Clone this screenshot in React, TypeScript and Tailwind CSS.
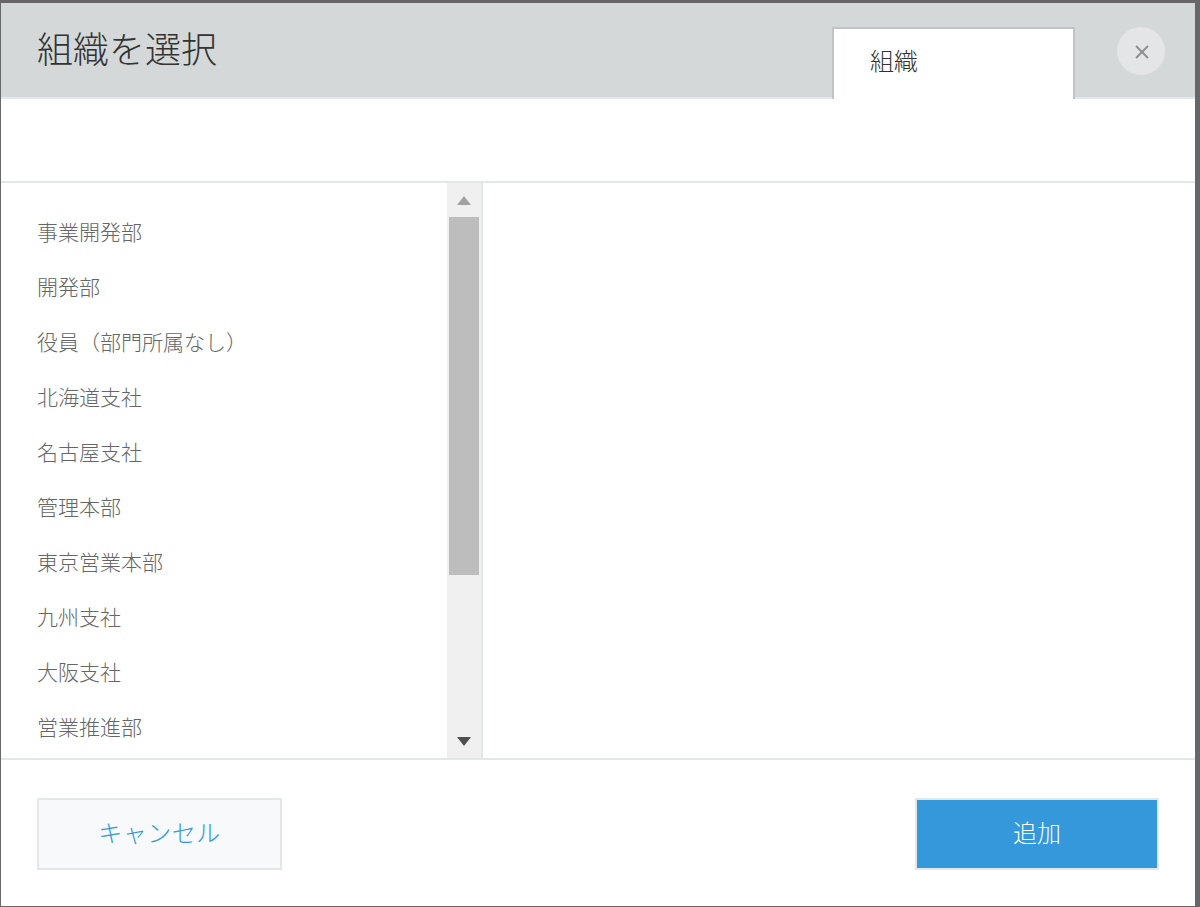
const items = ["事業開発部","開発部","役員（部門所属なし）","北海道支社","名古屋支社","管理本部","東京営業本部","九州支社","大阪支社","営業推進部"];
const font = "font-['Meiryo','Noto_Sans_CJK_JP','Noto_Sans_CJK_SC',sans-serif]";

export default function App() {
  return (
    <div className={`w-[1200px] h-[907px] bg-[#666769] pt-[3px] pl-px pr-[5px] pb-px overflow-hidden ${font} font-light`}>
      <div className="flex flex-col h-full bg-white">
        <header className="relative flex h-[96px] shrink-0 border-b-2 border-[#e3e7e8] bg-[#d4d8d8]">
          <h1 className="pl-[36px] pt-[18px] text-[36px] leading-[52px] font-light text-[#333]">組織を選択</h1>
          <div className="absolute left-[831px] top-[24px] h-[72px] w-[243px] border-2 border-b-0 border-[#bfc5c5] bg-white pl-[36px] pt-[13px] text-[24px] leading-[36px] text-[#333]">組織</div>
          <button className="absolute left-[1116px] top-[24px] flex h-12 w-12 items-center justify-center rounded-full bg-[#e3e5e7]">
            <svg className="ml-[2px] mt-[2px]" width="14" height="14" viewBox="0 0 14 14" fill="none" stroke="#8f8f8f" strokeWidth="2"><path d="M1 1l12 12M13 1L1 13"/></svg>
          </button>
        </header>
        <div className="h-[84px] shrink-0 border-b-2 border-[#e3e7e8]" />
        <div className="flex h-[577px] shrink-0 border-b-2 border-[#e3e7e8]">
          <ul className="w-[446px] pt-[21px] text-[21px] leading-[55px] text-[#666]">
            {items.map((t) => <li key={t} className="pl-[36px] whitespace-nowrap">{t}</li>)}
          </ul>
          <div className="flex w-[36px] flex-col items-center border-r-2 border-[#e3e7e8] bg-[#f0f0f0]">
            <svg className="mt-[13px]" width="14" height="9" viewBox="0 0 14 9"><path d="M7 0l7 9H0z" fill="#a3a3a3"/></svg>
            <div className="mt-[12px] h-[358px] w-[30px] bg-[#bdbdbd]" />
            <svg className="mt-[162px]" width="14" height="9" viewBox="0 0 14 9"><path d="M0 0h14L7 9z" fill="#505050"/></svg>
          </div>
          <div className="flex-1" />
        </div>
        <footer className="flex flex-1 items-start justify-between pl-[36px] pr-[36px] pt-[38px]">
          <button className="h-[72px] w-[245px] border-2 border-[#e3e7e8] bg-[#f7f9fa] pb-[4px] text-[24px] tracking-[0.5px] text-[#3498db]">キャンセル</button>
          <button className="h-[72px] w-[244px] border-2 border-[#e3e7e8] bg-[#3498db] pb-[4px] text-[24px] text-white">追加</button>
        </footer>
      </div>
    </div>
  );
}
